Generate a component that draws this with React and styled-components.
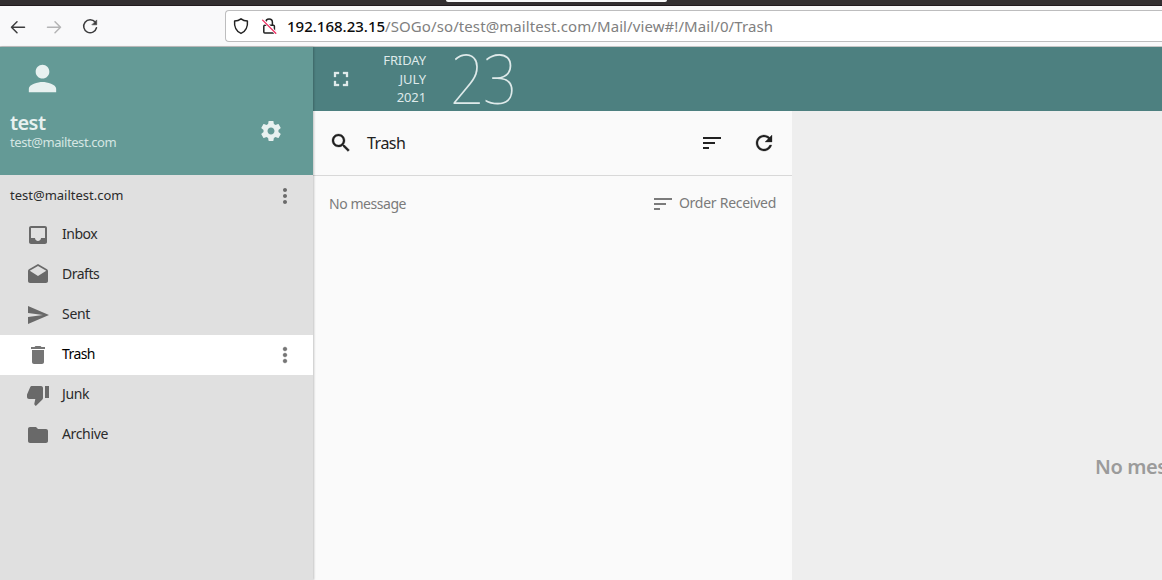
import React from 'react';
import styled, { createGlobalStyle } from 'styled-components';

const GlobalStyle = createGlobalStyle`
  *, *::before, *::after { box-sizing: border-box; }
  body { margin: 0; overflow: hidden; background: #eee; font-family: 'Noto Sans', 'Open Sans', sans-serif; }
`;

const Window = styled.div`
  display: flex;
  flex-direction: column;
  width: 1162px;
  height: 580px;
  overflow: hidden;
`;

const Text = styled.span`
  font-size: ${(p) => p.$size || 14}px;
  font-weight: ${(p) => p.$weight || 400};
  letter-spacing: ${(p) => p.$track || 0}px;
  color: ${(p) => p.$color || 'inherit'};
  line-height: ${(p) => p.$line || 20}px;
  white-space: nowrap;
`;

const TabStrip = styled.div`
  flex: none;
  height: 6px;
  padding-left: 446px;
  background: #332f31;
  border-bottom: 1px solid #211a1e;
`;

const ActiveTab = styled.div`
  width: 221px;
  height: 2px;
  background: #f9f9fa;
  border-radius: 0 0 3px 3px;
`;

const Toolbar = styled.div`
  flex: none;
  display: flex;
  align-items: flex-start;
  height: 41px;
  padding: 4px 0 0 8px;
  background: #f9f9fa;
  border-bottom: 1px solid #c6c6c6;
`;

const NavButton = styled.div`
  display: flex;
  align-items: center;
  width: 36px;
  height: 33px;
  color: ${(p) => (p.$muted ? '#b4b4b5' : '#3c3c3d')};
`;

const AddressBar = styled.div`
  display: flex;
  align-items: center;
  flex: 1;
  height: 32px;
  margin-left: 109px;
  padding-left: 5px;
  background: #fff;
  border: 1px solid #bdbdbe;
  border-right: 0;
  border-radius: 4px 0 0 4px;
  color: #222;
`;

const LockSlot = styled.span`
  display: flex;
  margin: 0 8px 0 8px;
`;

const Page = styled.div`
  flex: 1;
  display: flex;
  min-height: 0;
`;

const Sidebar = styled.aside`
  position: relative;
  z-index: 1;
  flex: none;
  width: 313px;
  background: #e0e0e0;
  box-shadow: 1px 0 2px rgba(0, 0, 0, 0.22);
`;

const Profile = styled.header`
  display: flex;
  justify-content: space-between;
  height: 128px;
  padding: 11px 30px 0 10px;
  background: #649a96;
  color: #e8f1f0;
`;

const Identity = styled.div`
  display: flex;
  flex-direction: column;
`;

const Avatar = styled.div`
  height: 54px;
  padding-left: 12px;
`;

const SettingsButton = styled.div`
  margin-top: 61px;
  height: 24px;
`;

const Account = styled.div`
  display: flex;
  align-items: center;
  justify-content: space-between;
  height: 40px;
  padding: 2px 16px 0 10px;
  color: #2b2b2b;

  & > span { margin-top: -2px; }
  & > svg { color: #6b6b6b; }
`;

const Folder = styled.div`
  display: flex;
  align-items: center;
  height: 40px;
  padding: 0 16px 0 26px;
  background: ${(p) => (p.$active ? '#fff' : 'transparent')};
  color: ${(p) => (p.$active ? '#000' : '#2b2b2b')};

  & > svg { flex: none; color: ${(p) => (p.$active ? '#757575' : '#696969')}; }
`;

const FolderName = styled(Text)`
  flex: 1;
  margin: -3px 0 0 12px;
`;

const Main = styled.main`
  flex: 1;
  display: flex;
  flex-direction: column;
  min-width: 0;
`;

const DateBar = styled.header`
  flex: none;
  display: flex;
  height: 64px;
  padding-left: 16px;
  background: #4d8080;
  color: #dfeaea;
`;

const FullscreenButton = styled.div`
  padding-top: 20px;
`;

const DateLines = styled.div`
  display: flex;
  flex-direction: column;
  align-items: flex-end;
  width: 73px;
  padding-top: 4px;
`;

const DayNumber = styled(Text)`
  margin-left: 24px;
  transform: scaleX(0.88);
  transform-origin: left;
`;

const Columns = styled.div`
  flex: 1;
  display: flex;
  min-height: 0;
`;

const MessageList = styled.section`
  width: 479px;
  background: #fafafa;
`;

const ListHeader = styled.div`
  display: flex;
  align-items: center;
  height: 65px;
  padding: 0 16px;
  border-bottom: 1px solid #d8d8d8;
  color: #212121;
`;

const ListTitle = styled(Text)`
  flex: 1;
  margin-left: 14px;
`;

const HeaderActions = styled.div`
  display: flex;
  gap: 28px;
`;

const SortRow = styled.div`
  display: flex;
  align-items: center;
  justify-content: space-between;
  padding: 16px 16px 0;
  color: #7b7b7b;
`;

const SortOrder = styled.div`
  display: flex;
  align-items: center;
  gap: 4px;

  & > span { margin-top: -2px; }
`;

const Preview = styled.section`
  flex: 1;
  overflow: hidden;
  padding: 342px 0 0 303px;
  background: #eee;
`;

const icons = {
  person: 'M12 12c2.21 0 4-1.79 4-4s-1.79-4-4-4-4 1.79-4 4 1.79 4 4 4zm0 2c-2.67 0-8 1.34-8 4v2h16v-2c0-2.66-5.33-4-8-4z',
  settings: 'M19.43 12.98c.04-.32.07-.64.07-.98s-.03-.66-.07-.98l2.11-1.65c.19-.15.24-.42.12-.64l-2-3.46c-.12-.22-.39-.3-.61-.22l-2.49 1c-.52-.4-1.08-.73-1.69-.98l-.38-2.65C14.46 2.18 14.25 2 14 2h-4c-.25 0-.46.18-.49.42l-.38 2.65c-.61.25-1.17.59-1.69.98l-2.49-1c-.23-.09-.49 0-.61.22l-2 3.46c-.13.22-.07.49.12.64l2.11 1.65c-.04.32-.07.65-.07.98s.03.66.07.98l-2.11 1.65c-.19.15-.24.42-.12.64l2 3.46c.12.22.39.3.61.22l2.49-1c.52.4 1.08.73 1.69.98l.38 2.65c.03.24.24.42.49.42h4c.25 0 .46-.18.49-.42l.38-2.65c.61-.25 1.17-.59 1.69-.98l2.49 1c.23.09.49 0 .61-.22l2-3.46c.12-.22.07-.49-.12-.64l-2.11-1.65zM12 15.5c-1.93 0-3.5-1.57-3.5-3.5s1.57-3.5 3.5-3.5 3.5 1.57 3.5 3.5-1.57 3.5-3.5 3.5z',
  more: 'M12 8c1.1 0 2-.9 2-2s-.9-2-2-2-2 .9-2 2 .9 2 2 2zm0 2c-1.1 0-2 .9-2 2s.9 2 2 2 2-.9 2-2-.9-2-2-2zm0 6c-1.1 0-2 .9-2 2s.9 2 2 2 2-.9 2-2-.9-2-2-2z',
  inbox: 'M19 3H4.99c-1.11 0-1.98.89-1.98 2L3 19c0 1.1.88 2 1.99 2H19c1.1 0 2-.9 2-2V5c0-1.11-.9-2-2-2zm0 12h-4c0 1.66-1.35 3-3 3s-3-1.34-3-3H4.99V5H19v10z',
  drafts: 'M21.99 8c0-.72-.37-1.35-.94-1.7L12 1 2.95 6.3C2.38 6.65 2 7.28 2 8v10c0 1.1.9 2 2 2h16c1.1 0 2-.9 2-2l-.01-10zM12 13L3.74 7.84 12 3l8.26 4.84L12 13z',
  send: 'M2.01 21L23 12 2.01 3 2 10l15 2-15 2z',
  trash: 'M6 19c0 1.1.9 2 2 2h8c1.1 0 2-.9 2-2V7H6v12zM19 4h-3.5l-1-1h-5l-1 1H5v2h14V4z',
  junk: 'M15 3H6c-.83 0-1.54.5-1.84 1.22l-3.02 7.05c-.09.23-.14.47-.14.73v2c0 1.1.9 2 2 2h6.31l-.95 4.57-.03.32c0 .41.17.79.44 1.06L9.83 23l6.59-6.59c.36-.36.58-.86.58-1.41V5c0-1.1-.9-2-2-2zm4 0v12h4V3h-4z',
  folder: 'M10 4H4c-1.1 0-1.99.9-1.99 2L2 18c0 1.1.9 2 2 2h16c1.1 0 2-.9 2-2V8c0-1.1-.9-2-2-2h-8l-2-2z',
  fullscreen: 'M7 14H5v5h5v-2H7v-3zm-2-4h2V7h3V5H5v5zm12 7h-3v2h5v-5h-2v3zM14 5v2h3v3h2V5h-5z',
  search: 'M15.5 14h-.79l-.28-.27C15.41 12.59 16 11.11 16 9.5 16 5.91 13.09 3 9.5 3S3 5.91 3 9.5 5.91 16 9.5 16c1.61 0 3.09-.59 4.23-1.57l.27.28v.79l5 4.99L20.49 19l-4.99-5zm-6 0C7.01 14 5 11.99 5 9.5S7.01 5 9.5 5 14 7.01 14 9.5 11.99 14 9.5 14z',
  sort: 'M3 18h6v-2H3v2zM3 6v2h18V6H3zm0 7h12v-2H3v2z',
  refresh: 'M17.65 6.35C16.2 4.9 14.21 4 12 4c-4.42 0-7.99 3.58-7.99 8s3.57 8 7.99 8c3.73 0 6.84-2.55 7.73-6h-2.08c-.82 2.33-3.04 4-5.65 4-3.31 0-6-2.69-6-6s2.69-6 6-6c1.66 0 3.14.69 4.22 1.78L13 11h7V4l-2.35 2.35z',
};

const Icon = ({ name, size = 24, bold }) => (
  <svg
    width={size}
    height={size}
    viewBox="0 0 24 24"
    fill="currentColor"
    stroke={bold ? 'currentColor' : 'none'}
    strokeWidth={bold ? 0.3 : 0}
  >
    <path d={icons[name]} />
  </svg>
);

const Stroke = ({ size = 20, children }) => (
  <svg width={size} height={size} viewBox="0 0 20 20" fill="none" stroke="currentColor" strokeWidth="1.5" strokeLinecap="round" strokeLinejoin="round">
    {children}
  </svg>
);

const folders = [
  { name: 'Inbox', icon: 'inbox', track: -0.5 },
  { name: 'Drafts', icon: 'drafts', track: -0.5 },
  { name: 'Sent', icon: 'send', track: -0.3 },
  { name: 'Trash', icon: 'trash', track: -0.6, active: true },
  { name: 'Junk', icon: 'junk', track: -0.4 },
  { name: 'Archive', icon: 'folder', track: -0.35 },
];

const Browser = () => (
  <>
    <TabStrip><ActiveTab /></TabStrip>
    <Toolbar>
      <NavButton><Stroke><path d="M16.5 10.3H3.5M9 4.8L3.5 10.3L9 15.8" /></Stroke></NavButton>
      <NavButton $muted><Stroke><path d="M3.5 10.3H16.5M11 4.8L16.5 10.3L11 15.8" /></Stroke></NavButton>
      <NavButton>
        <Stroke>
          <path d="M15.2 5.1A6.5 6.5 0 1 0 16.5 10.8" />
          <path d="M16.7 3.3V7.8H12.2Z" fill="currentColor" strokeWidth=".6" />
        </Stroke>
      </NavButton>
      <AddressBar>
        <Stroke><path d="M10 2.8C12 4.3 14.2 4.9 16.4 5C17 10.6 14.6 15.6 10 17.4C5.4 15.6 3 10.6 3.6 5C5.8 4.9 8 4.3 10 2.8Z" /></Stroke>
        <LockSlot>
          <Stroke>
            <rect x="4.8" y="9.3" width="10.6" height="7.7" rx="1" />
            <path d="M6.8 9V6.2A3.3 3.3 0 0 1 13.4 6.2V9" />
            <path d="M4 4.2L17 17.2" stroke="#fff" strokeWidth="3" />
            <path d="M3.6 4.1L16.8 17.3" stroke="#f02c60" strokeWidth="1.3" />
          </Stroke>
        </LockSlot>
        <Text $size={15} $color="#0c0c0d" $weight={500} $track={0}>192.168.23.15</Text>
        <Text $size={15} $color="#808080" $track={0.09}>/SOGo/so/test@mailtest.com/Mail/view#!/Mail/0/Trash</Text>
      </AddressBar>
    </Toolbar>
  </>
);

export default function App() {
  return (
    <Window>
      <GlobalStyle />
      <Browser />
      <Page>
        <Sidebar>
          <Profile>
            <Identity>
              <Avatar><Icon name="person" size={41} /></Avatar>
              <Text $size={20} $weight={600} $line={22} $track={-0.6}>test</Text>
              <Text $size={13} $line={16} $track={-0.43} $color="#d5e6e3">test@mailtest.com</Text>
            </Identity>
            <SettingsButton><Icon name="settings" /></SettingsButton>
          </Profile>
          <Account>
            <Text $size={13} $track={0}>test@mailtest.com</Text>
            <Icon name="more" />
          </Account>
          {folders.map((f) => (
            <Folder key={f.name} $active={f.active}>
              <Icon name={f.icon} />
              <FolderName $track={f.track}>{f.name}</FolderName>
              {f.active && <Icon name="more" bold />}
            </Folder>
          ))}
        </Sidebar>
        <Main>
          <DateBar>
            <FullscreenButton><Icon name="fullscreen" bold /></FullscreenButton>
            <DateLines>
              <Text $size={13} $line={18.5} $track={-0.1}>FRIDAY</Text>
              <Text $size={13} $line={18.5} $track={-0.1}>JULY</Text>
              <Text $size={13} $line={18.5} $track={-0.1}>2021</Text>
            </DateLines>
            <DayNumber $size={69} $weight={100} $line={61} $track={-2}>23</DayNumber>
          </DateBar>
          <Columns>
            <MessageList>
              <ListHeader>
                <Icon name="search" bold />
                <ListTitle $size={16} $track={-0.5}>Trash</ListTitle>
                <HeaderActions>
                  <Icon name="sort" />
                  <Icon name="refresh" bold />
                </HeaderActions>
              </ListHeader>
              <SortRow>
                <Text $track={-0.45}>No message</Text>
                <SortOrder>
                  <Icon name="sort" />
                  <Text $track={-0.27}>Order Received</Text>
                </SortOrder>
              </SortRow>
            </MessageList>
            <Preview><Text $size={20} $weight={600} $line={28} $track={-0.4} $color="#9b9b9b">No message selected</Text></Preview>
          </Columns>
        </Main>
      </Page>
    </Window>
  );
}
